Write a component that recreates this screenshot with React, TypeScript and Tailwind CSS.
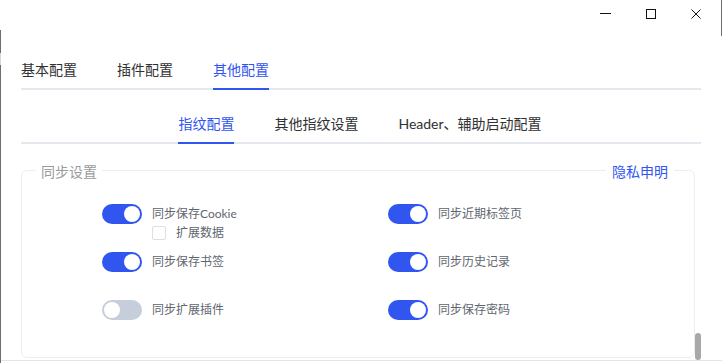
import React from 'react';

const font = { fontFamily: 'Lato, "Noto Sans CJK SC", sans-serif' };

function Toggle({ on }: { on: boolean }) {
  return (
    <div
      className={`w-[40px] h-[20px] rounded-full flex items-center px-[2px] shrink-0 ${
        on ? 'bg-[#3155ef] justify-end' : 'bg-[#c5ceda] justify-start'
      }`}
    >
      <div className="w-[16px] h-[16px] rounded-full bg-white" />
    </div>
  );
}

function Item({ on, label }: { on: boolean; label: string }) {
  return (
    <div className="flex items-center h-[20px]">
      <Toggle on={on} />
      <span className="ml-[10px] text-[12px] leading-[20px] text-[#5f6670]">{label}</span>
    </div>
  );
}

export default function App() {
  return (
    <div className="relative w-[722px] h-[363px] bg-white overflow-hidden" style={font}>
      {/* window edge fragments */}
      <div className="absolute left-0 top-[30px] w-px h-[23px] bg-[#6e6e6e]" />
      <div className="absolute left-0 top-[53px] w-px h-[12px] bg-[#d8d8d8]" />
      <div className="absolute left-0 top-[65px] w-px h-[298px] bg-[#6e6e6e]" />
      <div className="absolute right-0 top-0 w-px h-[36px] bg-[#6e6e6e]" />

      {/* title bar */}
      <div className="h-[32px] flex items-start justify-end pr-[4px]">
        <div className="w-[45px] h-[27px] flex items-center justify-center">
          <div className="w-[11px] h-px bg-[#111]" />
        </div>
        <div className="w-[45px] h-[27px] flex items-center justify-center">
          <div className="w-[10px] h-[10px] border border-[#111]" />
        </div>
        <div className="w-[45px] h-[27px] flex items-center justify-center">
          <svg width="10" height="10" viewBox="0 0 10 10">
            <path d="M0.5 0.5L9.5 9.5M9.5 0.5L0.5 9.5" stroke="#111" strokeWidth="1" />
          </svg>
        </div>
      </div>

      <div className="pl-[21px] pr-[21px] pt-[28px]">
        {/* main tabs */}
        <div className="flex border-b-2 border-[#e4e7ed] gap-[40px]">
          <div className="pb-[8px] -mb-[2px] text-[14px] leading-[20px] text-[#303133]">基本配置</div>
          <div className="pb-[8px] -mb-[2px] text-[14px] leading-[20px] text-[#303133]">插件配置</div>
          <div className="pb-[8px] -mb-[2px] text-[14px] leading-[20px] text-[#3155ef] border-b-2 border-[#3155ef]">
            其他配置
          </div>
        </div>

        {/* sub tabs */}
        <div className="mt-[24px] flex justify-center border-b-2 border-[#e4e7ed] gap-[40px] pr-[2px]">
          <div className="pb-[8px] -mb-[2px] text-[14px] leading-[20px] text-[#3155ef] border-b-2 border-[#3155ef]">
            指纹配置
          </div>
          <div className="pb-[8px] -mb-[2px] text-[14px] leading-[20px] text-[#303133]">其他指纹设置</div>
          <div className="pb-[8px] -mb-[2px] text-[14px] leading-[20px] text-[#303133]">Header、辅助启动配置</div>
        </div>

        {/* card */}
        <div className="relative mt-[26px] mr-[6px] h-[188px] border border-[#eceef2] rounded-[6px]">
          <div className="absolute -top-[9px] left-[14px] px-[5px] bg-white text-[14px] leading-[20px] text-[#9a9a9a]">
            同步设置
          </div>
          <div className="absolute -top-[9px] right-[20px] px-[6px] bg-white text-[14px] leading-[20px] text-[#3155ef]">
            隐私申明
          </div>

          <div className="grid grid-cols-[286px_1fr] pl-[80px] pt-[33px]">
            <div className="h-[48px]">
              <Item on label="同步保存Cookie" />
              <div className="flex items-center mt-[2px] ml-[50px]">
                <div className="w-[14px] h-[14px] border border-[#dcdfe6] rounded-[2px]" />
                <span className="ml-[10px] text-[12px] leading-[14px] text-[#5f6670]">扩展数据</span>
              </div>
            </div>
            <div className="h-[48px]">
              <Item on label="同步近期标签页" />
            </div>
            <div className="h-[48px]">
              <Item on label="同步保存书签" />
            </div>
            <div className="h-[48px]">
              <Item on label="同步历史记录" />
            </div>
            <div className="h-[48px]">
              <Item on={false} label="同步扩展插件" />
            </div>
            <div className="h-[48px]">
              <Item on label="同步保存密码" />
            </div>
          </div>
        </div>
      </div>

      {/* scrollbar thumb */}
      <div className="absolute left-[695px] top-[333px] w-[6px] h-[27px] rounded-full bg-[#a8a8a8]" />
      {/* bottom edge */}
      <div className="absolute left-px right-0 top-[360px] h-px bg-[#e3e5ea]" />
    </div>
  );
}
